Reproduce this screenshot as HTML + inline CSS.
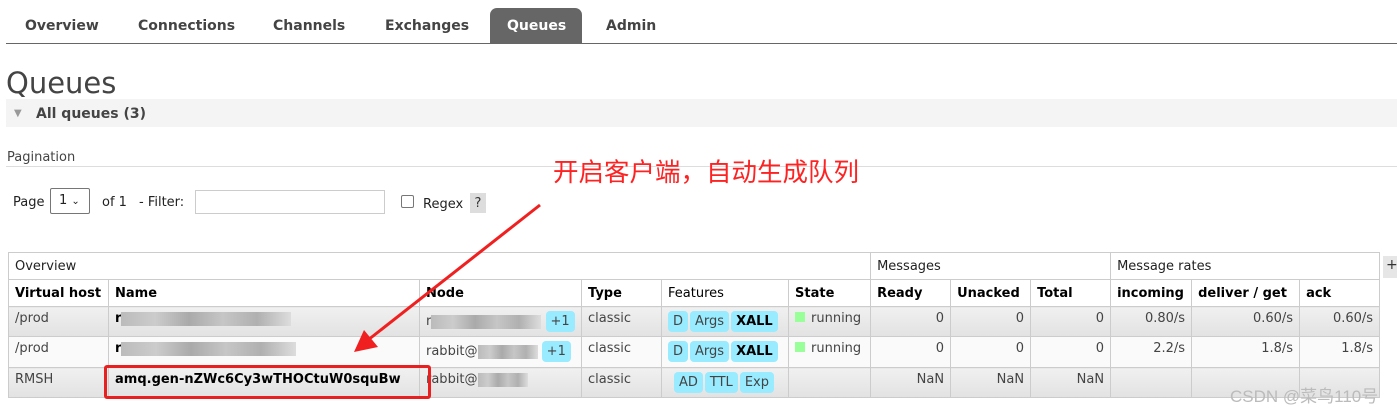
<!DOCTYPE html>
<html><head><meta charset="utf-8"><style>
*{margin:0;padding:0;box-sizing:border-box}
body{width:1397px;height:411px;background:#fff;font-family:"DejaVu Sans","Liberation Sans",sans-serif;color:#333;position:relative;overflow:hidden;font-size:13px}
.a{position:absolute;white-space:nowrap}
.tab{position:absolute;top:18px;font-weight:bold;font-size:14px;color:#444}
table{position:absolute;left:8px;top:252px;border-collapse:collapse;table-layout:fixed;width:1371px}
td,th{border:1px solid #ccc;height:27px;padding:0 6px;font-size:13px;text-align:left;white-space:nowrap;overflow:hidden}
th{font-weight:bold;color:#000}
.g td{background:linear-gradient(#f0f0f0,#e2e2e2);height:30px;color:#444;vertical-align:top;padding-top:4px}
.w td{background:#fafafa;height:31px;color:#444;vertical-align:top;padding-top:4px}
.r{text-align:right}
.b{display:inline-block;background:#99ebff;border-radius:4px;padding:3px 5px;color:#444;margin-right:2px}
.bx{font-weight:bold;color:#000}
.run{display:inline-block;width:10px;height:10px;background:#9f9;margin-right:6px}
.blur{display:inline-block;height:14px;background:linear-gradient(90deg,#bbb,#ccc,#aaa,#c6c6c6,#b0b0b0,#ddd);vertical-align:middle}
</style></head><body>
<div class="tab" style="left:25px">Overview</div>
<div class="tab" style="left:138px">Connections</div>
<div class="tab" style="left:273px">Channels</div>
<div class="tab" style="left:385px">Exchanges</div>
<div class="a" style="left:490px;top:8px;width:92px;height:35px;background:#666;border-radius:7px 7px 0 0"></div>
<div class="tab" style="left:507px;color:#fff">Queues</div>
<div class="tab" style="left:606px">Admin</div>
<div class="a" style="left:6px;top:43px;width:1391px;height:1px;background:#666"></div>
<div class="a" style="left:6px;top:66px;font-size:29px;color:#444">Queues</div>
<div class="a" style="left:6px;top:99px;width:1391px;height:28px;background:#f4f4f4"></div>
<div class="a" style="left:14px;top:108px;font-size:10px;color:#999">▼</div>
<div class="a" style="left:36px;top:106px;font-weight:bold;font-size:14px;color:#444">All queues (3)</div>
<div class="a" style="left:7px;top:150px;color:#444">Pagination</div>
<div class="a" style="left:6px;top:166px;width:1391px;height:1px;background:#ddd"></div>
<div class="a" style="left:13px;top:195px;color:#222">Page</div>
<div class="a" style="left:50px;top:188px;width:40px;height:26px;border:1px solid #767676;border-radius:2px;padding:4px 0 0 8px;color:#222">1 <span style="font-size:10px">⌄</span></div>
<div class="a" style="left:102px;top:195px;color:#222">of 1</div>
<div class="a" style="left:139px;top:195px;color:#222">- Filter:</div>
<div class="a" style="left:195px;top:190px;width:190px;height:24px;border:1px solid #ccc"></div>
<div class="a" style="left:401px;top:195px;width:13px;height:13px;border:1px solid #777;border-radius:2px"></div>
<div class="a" style="left:423px;top:197px;color:#222">Regex</div>
<div class="a" style="left:470px;top:193px;width:16px;height:20px;background:#ddd;text-align:center;padding-top:3px">?</div>
<div class="a" style="left:553px;top:152px;font-size:25.5px;color:#f22;font-family:'Noto Sans CJK SC',sans-serif">开启客户端，自动生成队列</div>
<div class="a" style="left:1383px;top:256px;width:14px;height:22px;background:#e6e6e6;font-size:14px;padding:1px 0 0 3px">+</div>
<table>
<colgroup><col style="width:100px"><col style="width:311px"><col style="width:162px"><col style="width:80px"><col style="width:127px"><col style="width:82px"><col style="width:80px"><col style="width:80px"><col style="width:80px"><col style="width:81px"><col style="width:108px"><col style="width:80px"></colgroup>
<tr><td colspan="6" style="color:#222">Overview</td><td colspan="3" style="color:#222">Messages</td><td colspan="3" style="color:#222">Message rates</td></tr>
<tr><th>Virtual host</th><th>Name</th><th>Node</th><th>Type</th><th style="font-weight:normal">Features</th><th>State</th><th>Ready</th><th>Unacked</th><th>Total</th><th>incoming</th><th>deliver / get</th><th>ack</th></tr>
<tr class="g"><td>/prod</td><td><b style="color:#000">r</b><span class="blur" style="width:170px"></span></td><td>r<span class="blur" style="width:110px"></span> <span class="b">+1</span></td><td>classic</td><td><span class="b">D</span><span class="b">Args</span><span class="b bx">XALL</span></td><td><span class="run"></span>running</td><td class="r">0</td><td class="r">0</td><td class="r">0</td><td class="r">0.80/s</td><td class="r">0.60/s</td><td class="r">0.60/s</td></tr>
<tr class="w"><td>/prod</td><td><b style="color:#000">r</b><span class="blur" style="width:175px"></span></td><td>rabbit@<span class="blur" style="width:60px"></span> <span class="b">+1</span></td><td>classic</td><td><span class="b">D</span><span class="b">Args</span><span class="b bx">XALL</span></td><td><span class="run"></span>running</td><td class="r">0</td><td class="r">0</td><td class="r">0</td><td class="r">2.2/s</td><td class="r">1.8/s</td><td class="r">1.8/s</td></tr>
<tr class="g"><td>RMSH</td><td style="font-weight:bold;color:#000">amq.gen-nZWc6Cy3wTHOCtuW0squBw</td><td>rabbit@<span class="blur" style="width:50px"></span></td><td>classic</td><td style="padding-left:12px"><span class="b">AD</span><span class="b">TTL</span><span class="b">Exp</span></td><td></td><td class="r">NaN</td><td class="r">NaN</td><td class="r">NaN</td><td></td><td></td><td></td></tr>
</table>
<div class="a" style="left:104px;top:365px;width:327px;height:34px;border:3px solid #e82020;border-radius:3px"></div>
<svg class="a" style="left:0;top:0" width="1397" height="411"><line x1="540" y1="205" x2="368" y2="340" stroke="#f02020" stroke-width="3"/><polygon points="354,352 364,330 378,347" fill="#f02020"/></svg>
<div class="a" style="left:1230px;top:382px;font-size:17px;color:#bbb;font-family:'Liberation Sans','Noto Sans CJK SC',sans-serif">CSDN @菜鸟110号</div>
</body></html>
